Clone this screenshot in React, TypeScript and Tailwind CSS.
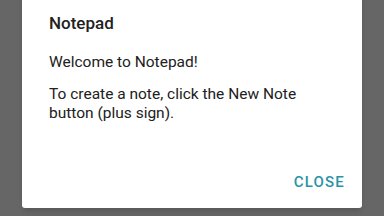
export default function App() {
  return (
    <div
      className="flex h-[216px] w-[384px] justify-center overflow-hidden bg-[#666666]"
      style={{ fontFamily: 'Roboto, "Noto Sans", sans-serif' }}
    >
      <div className="mt-[-20px] flex h-[228px] w-[340px] flex-col rounded-[3px] bg-white shadow-md">
        <div className="pl-[27px] pr-[26px] pt-[31px]">
          <h1 className="text-[17px] font-medium leading-[24px] text-[#212121]">Notepad</h1>
          <p className="mt-[17px] text-[15.5px] leading-[20px] text-[#212121]">Welcome to Notepad!</p>
          <p className="mt-[13px] text-[15.5px] leading-[19px] text-[#212121]">
            To create a note, click the New Note button (plus sign).
          </p>
        </div>
        <div className="mt-auto flex justify-end px-[17px] pb-[15px]">
          <button className="text-[15px] font-medium tracking-[1.2px] text-[#2b93a8]">CLOSE</button>
        </div>
      </div>
    </div>
  );
}
